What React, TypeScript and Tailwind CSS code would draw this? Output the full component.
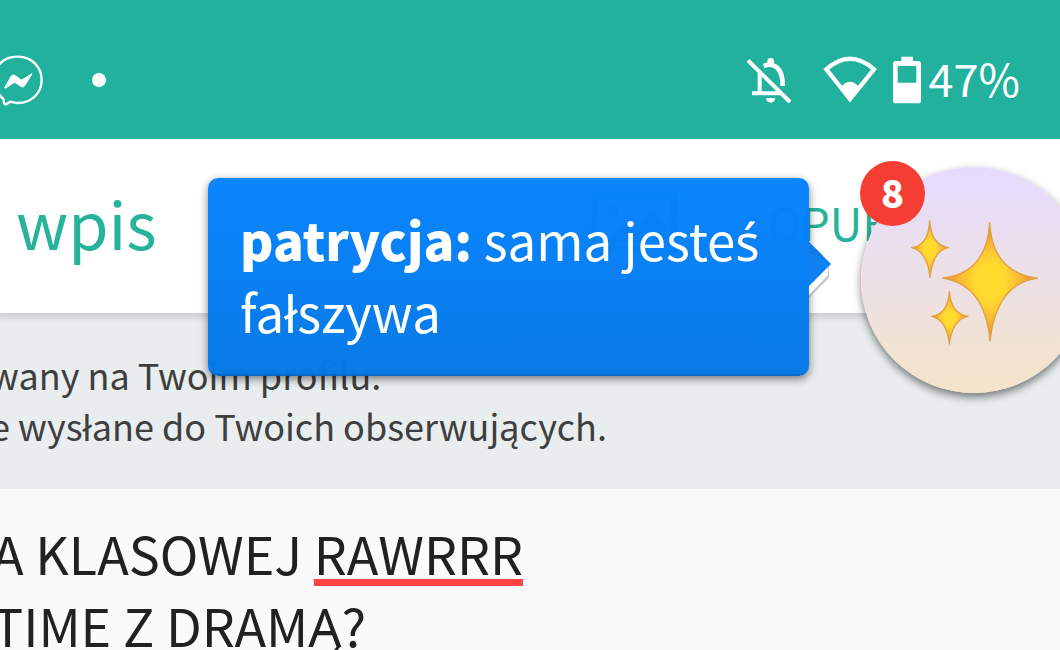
import type { ReactNode } from 'react';

const sparkles = [
  'M449 218Q456 366 592 385Q470 400 450 573Q436 404 308 384Q440 370 449 218Z',
  'M269 212Q274 286 325 293Q278 302 270 382Q262 304 215 293Q266 286 269 212Z',
  'M328 425Q333 492 384 499Q337 508 328 582Q321 510 275 499Q324 492 328 425Z',
];

function MessengerIcon() {
  return (
    <svg viewBox="-24 45 150 150" className="size-[50px] shrink-0 overflow-visible" fill="none" aria-hidden="true">
      <path
        d="M-4 162C-30 122 -18 50 54 50C96 50 125 82 125 120C125 158 96 189 54 189C46 189 40 187 31 185L18 193Q12 194 12 187L10 177Q4 171 -4 162Z"
        stroke="white"
        strokeWidth="7"
      />
      <path d="M14 143L34 108Q39 102 46 107L62 119Q65 121 69 118L96 101L74 137Q69 144 62 139L48 129Q44 126 40 129L16 145Z" fill="white" stroke="white" strokeWidth="3" />
    </svg>
  );
}

function BellOffIcon() {
  return (
    <svg viewBox="44 45 147 150" className="h-[50px] w-[49px] shrink-0" fill="none" stroke="white" strokeWidth="12" aria-hidden="true">
      <path d="M50 61L176 186" />
      <path d="M85 98V160M62 160H146" />
      <path d="M97 78C128 66 155 84 154 138" strokeWidth="14" />
      <path d="M108 72V64Q108 54 118 54Q128 54 128 64V72ZM104 174H132Q130 188 118 188Q106 188 104 174Z" fill="white" stroke="none" />
    </svg>
  );
}

function WifiIcon() {
  return (
    <svg viewBox="274 42 162 150" className="h-[50px] w-[54px] shrink-0" fill="none" aria-hidden="true">
      <path d="M284 85Q355 22 427 85L355 174Z" stroke="white" strokeWidth="13" />
      <path d="M328 138Q355 106 382 138L355 174Z" fill="white" />
    </svg>
  );
}

function BatteryIcon() {
  return (
    <svg viewBox="486 42 84 150" className="h-[50px] w-7 shrink-0" fill="white" aria-hidden="true">
      <path fillRule="evenodd" d="M511 47H546V60H562Q570 60 570 68V179Q570 187 562 187H494Q486 187 486 179V68Q486 60 494 60H511ZM500 75V125H556V75Z" />
    </svg>
  );
}

function StatusBar() {
  return (
    <div className="relative z-10 flex h-[139px] items-center bg-[#21b19c] pt-5 pr-10 text-white">
      <div className="-ml-2 flex items-center gap-[50px]">
        <MessengerIcon />
        <span className="size-[14px] rounded-full bg-white" />
      </div>
      <div className="ml-auto flex items-center">
        <BellOffIcon />
        <span className="ml-7 flex">
          <WifiIcon />
        </span>
        <span className="ml-4 flex">
          <BatteryIcon />
        </span>
        <span className="ml-2 pb-1 text-[45px] leading-[46px]">47%</span>
      </div>
    </div>
  );
}

function Header() {
  return (
    <header className="relative flex h-[174px] items-center bg-white px-4 pb-2 text-[#26b29b] shadow-[0_-4px_8px_8px_rgba(0,0,0,0.14)]">
      <h1 className="text-[65px] leading-[80px]">wpis</h1>
      <button type="button" aria-label="Dodaj zdjęcie" className="ml-auto">
        <svg viewBox="0 0 87 60" className="h-[60px] w-[87px]" fill="none" stroke="currentColor" strokeWidth="7">
          <path d="M4 4H83V56H4Z" />
          <path d="M14 50L34 30L44 38L60 18L74 36V50Z" fill="currentColor" stroke="none" />
          <circle cx="22" cy="18" r="6" fill="currentColor" stroke="none" />
        </svg>
      </button>
      <button type="button" className="mr-8 ml-[90px] text-[45px] leading-[50px]">
        OPUBLIKUJ
      </button>
    </header>
  );
}

function Bubble({ author, children }: { author: string; children: ReactNode }) {
  return (
    <div className="relative mt-[11px] w-[601px] rounded-[10px] border-b-2 border-[#0568c4] bg-linear-to-b from-[#0784ff] to-[#0478e6] px-8 pt-[25px] pb-[27px] text-[51px] leading-[72px] text-white opacity-98 shadow-[0_3px_8px_rgba(0,0,0,0.5)]">
      <p>
        <strong className="font-black">{author}:</strong> {children}
      </p>
      <svg viewBox="0 0 30 70" className="absolute top-[58px] left-full h-[70px] w-[30px]" aria-hidden="true">
        <path d="M0 62L20 42V30L0 52Z" fill="#777777" opacity="0.4" />
        <path d="M0 59L19 39V28L0 50Z" fill="white" />
        <path d="M0 6L22 28L0 50Z" fill="#0a80f3" />
        <path d="M0 6L14 20V23L0 17Z" fill="#0b78e2" />
      </svg>
    </div>
  );
}

function ChatHead({ unread }: { unread: number }) {
  return (
    <button type="button" aria-label="Czat" className="relative size-[226px] shrink-0 rounded-full bg-linear-to-b from-[#e6dbff] to-[#f4e4c9] shadow-[0_4px_8px_rgba(0,0,0,0.5)]">
      <svg viewBox="63 51 678 678" className="size-full" aria-hidden="true">
        <defs>
          <radialGradient id="gold">
            <stop offset="0.3" stopColor="#ffdb2e" />
            <stop offset="0.6" stopColor="#f9bd35" />
            <stop offset="1" stopColor="#e5813c" />
          </radialGradient>
        </defs>
        {sparkles.map((d) => (
          <path key={d} d={d} fill="url(#gold)" stroke="#e2a040" strokeWidth="4" strokeLinejoin="round" />
        ))}
      </svg>
      <span className="absolute -top-[6px] -left-px flex size-[65px] items-center justify-center rounded-full bg-[#f43d33] pb-1 text-[38px] leading-none font-black text-white">
        {unread}
      </span>
    </button>
  );
}

export default function App() {
  return (
    <div className="relative flex min-h-screen flex-col overflow-hidden bg-[#fafafa] font-['Noto_Sans_CJK_SC','Noto_Sans',sans-serif]">
      <StatusBar />
      <Header />
      <section className="-ml-[10px] h-[176px] bg-[#e9edee] pt-9 text-[36px] leading-[51px] whitespace-nowrap text-[#3d3f40]">
        <p>wany na Twoim profilu.</p>
        <p>e wysłane do Twoich obserwujących.</p>
      </section>
      <div
        role="textbox"
        aria-label="Treść wpisu"
        contentEditable
        suppressContentEditableWarning
        spellCheck={false}
        className="-ml-2 h-[161px] overflow-hidden pt-7 text-[52px] leading-[72px] whitespace-nowrap text-[#212121] outline-none"
      >
        <p>
          A KLASOWEJ{' '}
          <span className="underline decoration-[#ff4444] decoration-7 underline-offset-4 [text-decoration-skip-ink:none]">RAWRRR</span>
        </p>
        <p>TIME Z DRAMĄ?</p>
      </div>
      <div className="absolute top-[167px] -right-[27px] z-20 flex items-start gap-[52px]">
        <Bubble author="patrycja">
          sama jeste<span className="font-['Noto_Sans'] leading-none">ś</span> fałszywa
        </Bubble>
        <ChatHead unread={8} />
      </div>
    </div>
  );
}
